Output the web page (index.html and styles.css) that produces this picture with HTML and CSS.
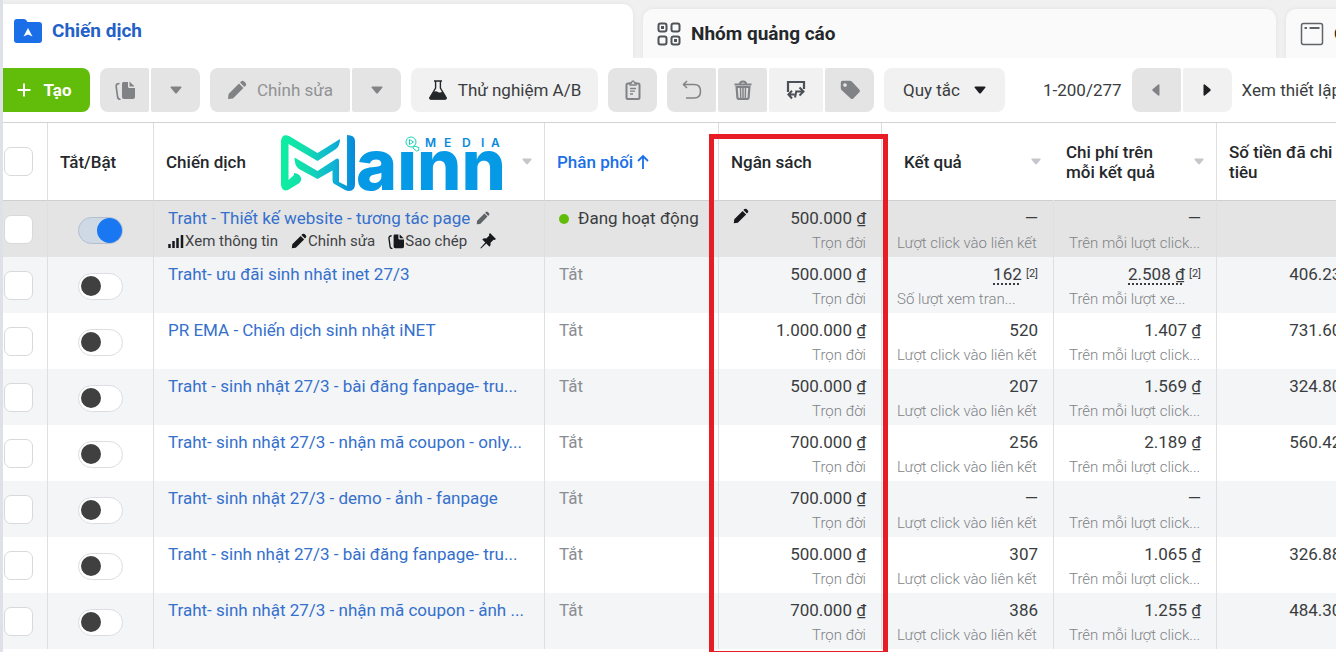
FILE: index.html
```html
<!DOCTYPE html>
<html lang="vi">
<head>
<meta charset="utf-8">
<title>Chiến dịch</title>
<link rel="stylesheet" href="styles.css">
</head>
<body>
<svg class="sprite" aria-hidden="true">
  <symbol id="i-pencil" viewBox="0 0 20 20"><path d="M1 19l.6-5L12 3.6 16.4 8 6 18.400z M13 2.600l1.300-1.300q1.300-1 2.600 0l1.800 1.800q1 1.300 0 2.600L17.400 7z" fill="currentColor"/></symbol>
  <symbol id="i-copy" viewBox="0 0 20 20"><path d="M8.500 2H13v4.500q0 1.500 1.500 1.500H20v9q0 2-2 2H9q-2 0-2-2V3.500Q7 2 8.500 2z" fill="currentColor"/><path d="M14.500 1.600L19.600 6.500H15q-.5 0-.5-.5z" fill="currentColor"/><path d="M4.500 3.500Q1 3.500 1.200 6.500L2.600 17q.4 2.500 3 2.500" fill="none" stroke="currentColor" stroke-width="1.700"/></symbol>
  <symbol id="i-down" viewBox="0 0 12 8"><path d="M1.300.5h9.400q1.300.2.600 1.300L7 7q-1 1-2 0L.7 1.800Q0 .7 1.300.5z" fill="currentColor"/></symbol>
  <symbol id="i-left" viewBox="0 0 8 12"><path d="M7.500 1v10q-.2 1-1.300.5L.8 7q-1-1 0-2L6.200.5Q7.300 0 7.500 1z" fill="currentColor"/></symbol>
  <symbol id="i-right" viewBox="0 0 8 12"><path d="M.5 1v10q.2 1 1.300.5L7.200 7q1-1 0-2L1.800.5Q.7 0 .5 1z" fill="currentColor"/></symbol>
</svg>

<div class="app">
  <nav class="tabs">
    <a class="tab tab-active" href="#campaigns">
      <svg class="tab-icon folder" viewBox="0 0 28 26"><path d="M3 1h7q1.500 0 2.500 1.500L13.500 4H25q3 0 3 3v15q0 3-3 3H3q-3 0-3-3V4q0-3 3-3z" fill="#1a6fe8"/><path d="M14 10l4.500 8.500L14 16.500l-4.500 2z" fill="#fff"/></svg>
      Chiến dịch
    </a>
    <a class="tab" href="#adsets">
      <svg class="tab-icon" viewBox="0 0 24 24" fill="none" stroke="#505357" stroke-width="2"><rect x="1.500" y="1.500" width="8" height="8" rx="2"/><rect x="14.500" y="1.500" width="8" height="8" rx="2"/><rect x="1.500" y="14.500" width="8" height="8" rx="2"/><rect x="14.500" y="14.500" width="8" height="8" rx="2"/><path d="M4 5.500h3M17 18.500h3" stroke-width="3"/></svg>
      Nhóm quảng cáo
    </a>
    <a class="tab" href="#ads">
      <svg class="tab-icon" viewBox="0 0 24 24" fill="none" stroke="#606468" stroke-width="1.500"><rect x="1.500" y="1.500" width="21" height="21" rx="2"/><path d="M4.500 6h2.500M9.500 6h10" stroke-width="2"/></svg>
      Quảng cáo
    </a>
  </nav>

  <div class="toolbar">
    <button class="btn create"><svg class="i16" viewBox="0 0 16 16"><path d="M8 1.500v13M1.500 8h13" stroke="#fff" stroke-width="2"/></svg>Tạo</button>
    <div class="group">
      <button class="btn off square" aria-label="Sao chép"><svg class="i20"><use href="#i-copy"/></svg></button>
      <button class="btn off square" aria-label="Tùy chọn sao chép"><svg class="caret"><use href="#i-down"/></svg></button>
    </div>
    <div class="group">
      <button class="btn off edit"><svg class="i20"><use href="#i-pencil"/></svg>Chỉnh sửa</button>
      <button class="btn off square" aria-label="Tùy chọn chỉnh sửa"><svg class="caret"><use href="#i-down"/></svg></button>
    </div>
    <button class="btn ab"><svg class="i20" viewBox="0 0 20 20"><path d="M6 1h8M7.600 1v7L2 17.500q-.6 1.500 1 1.500h14q1.600 0 1-1.500L12.400 8V1" fill="none" stroke="#25282b" stroke-width="1.400"/><path d="M5 12.500q2.500-2 5-.5t4.700-.8L18.500 17.500q.5 2-1.500 2H3q-2 0-1.500-2z" fill="#25282b"/></svg>Thử nghiệm A/B</button>
    <button class="btn off square" aria-label="Bảng tạm"><svg class="i20" viewBox="0 0 20 20" fill="none" stroke="currentColor"><rect x="3.500" y="3.500" width="13" height="15.500" rx="1.500" stroke-width="2"/><path d="M7 5V3h1.500q.2-2 1.500-2t1.500 2H13v2z" fill="#e4e4e4" stroke-width="1.300"/><path d="M7 8.500h6M7 11.200h5M7 14h3" stroke-width="1.300"/></svg></button>
    <div class="group">
      <button class="btn off square" aria-label="Hoàn tác"><svg class="i20" viewBox="0 0 20 20" fill="none" stroke="currentColor" stroke-width="1.500"><path d="M1.500 4.500H12q6.500 0 6.500 6.700T12 18H4"/><path d="M5 1L1.500 4.500 5 8"/></svg></button>
      <button class="btn off square" aria-label="Xóa"><svg class="i20" viewBox="0 0 20 20" fill="none" stroke="currentColor"><path d="M1.500 4.500h17" stroke-width="2"/><path d="M7 4q0-2.500 3-2.500T13 4" stroke-width="2"/><path d="M3.600 7l.8 10.500q.2 1.500 1.700 1.500h7.800q1.500 0 1.700-1.500L16.400 7z" stroke-width="2.200"/><path d="M7.500 7l.2 11M10 7v11M12.500 7l-.2 11" stroke-width="1.500"/></svg></button>
      <button class="btn export" aria-label="Xuất"><svg class="i20" viewBox="0 0 20 20" fill="none" stroke="#4b5057" stroke-width="2"><path d="M2 12V2h16v7" stroke-width="2.200"/><path d="M8.500 14.500H2.500M6 10.800l-3.600 3.700L6 18.500M10 11.500h7M13.500 7.500l4 4-4 4M9 17.500l1.500-7"/></svg></button>
      <button class="btn off square" aria-label="Gắn nhãn"><svg class="i20" viewBox="0 0 20 20"><path fill-rule="evenodd" d="M2.500.8l7.500 0q1 0 1.800.8l7.500 8q1.200 1.400 0 2.700l-6 6.200q-1.300 1.200-2.600 0L1.500 10Q.8 9 .8 8V2.500Q.8.8 2.500.8zM5 3.200a1.800 1.800 0 1 0 .01 0z" fill="currentColor"/></svg></button>
    </div>
    <button class="btn rules">Quy tắc<svg class="caret"><use href="#i-down"/></svg></button>
    <div class="pager">
      <span>1-200/277</span>
      <div class="group">
        <button class="btn off square" aria-label="Trang trước"><svg class="side"><use href="#i-left"/></svg></button>
        <button class="btn square" aria-label="Trang sau"><svg class="side"><use href="#i-right"/></svg></button>
      </div>
      <span>Xem thiết lập</span>
    </div>
  </div>

  <div class="grid">
    <table>
      <colgroup><col class="c-check"><col class="c-toggle"><col class="c-name"><col class="c-delivery"><col class="c-budget"><col class="c-result"><col class="c-cost"><col class="c-spend"></colgroup>
      <thead>
        <tr>
          <th><input class="check" type="checkbox" aria-label="Chọn tất cả"></th>
          <th>Tắt/Bật</th>
          <th><div class="head">Chiến dịch
            <svg class="logo" viewBox="0 -1 224 60" role="img" aria-label="Mainn Media">
              <defs>
                <linearGradient id="g" gradientUnits="userSpaceOnUse" x1="0" y1="30" x2="75" y2="30"><stop offset="0" stop-color="#0cf0a0"/><stop offset=".35" stop-color="#14dcae"/><stop offset=".7" stop-color="#0fb4d4"/><stop offset="1" stop-color="#0789dc"/></linearGradient>
              </defs>
              <path d="M1 8Q2 0 9 3L37.500 20 60 6q0 7-4 10L37.500 28 8.500 11V47l5.500-5V40q8 1 7 7.500-.5 2-4 4L8 57q-6 2-7-5z" fill="url(#g)"/>
              <path d="M14.500 24.500L37.500 38 56 26q3-1.500 3 2v21l8 4V2q8 0 8 6v43q0 7-6 7-2 0-4-1L54.500 51q-2-1-2-4V37.500L37.500 46 19 36q-4.500-3-4.500-11.500z" fill="url(#g)"/>
              <text class="logo-word" x="76" y="57">aınn</text>
              <text class="logo-media" x="145 164 182 201 211" y="14">MEDIA</text>
              <g fill="none" stroke="#19d3b4" stroke-width="1"><circle cx="131" cy="9" r="5"/><path d="M129.500 6.500v5l4-2.500zM133 15l1-2 5 1.500-.5 3-2 .5z"/></g>
            </svg>
            <svg class="sort"><use href="#i-down"/></svg></div></th>
          <th class="sorted"><div class="head">Phân phối<svg class="arrow" viewBox="0 0 12 16" fill="none" stroke="currentColor" stroke-width="1.800"><path d="M6 15V2M1 7l5-5 5 5"/></svg></div></th>
          <th>Ngân sách</th>
          <th class="wide"><div class="head">Kết quả<svg class="sort"><use href="#i-down"/></svg></div></th>
          <th class="joined"><div class="head">Chi phí trên<br>mỗi kết quả<svg class="sort"><use href="#i-down"/></svg></div></th>
          <th>Số tiền đã chi tiêu</th>
        </tr>
      </thead>
      <tbody>
        <tr class="hovered">
          <td><input class="check" type="checkbox" aria-label="Chọn"></td>
          <td><input class="toggle" type="checkbox" role="switch" aria-label="Bật" checked></td>
          <td class="name"><div class="line"><a href="#c1">Traht - Thiết kế website - tương tác page</a><svg class="pen"><use href="#i-pencil"/></svg></div>
            <div class="actions">
              <button><svg class="i16" viewBox="0 0 16 16"><path d="M1.500 11v4M5.500 8v7M9.500 5v10M14 2v13" stroke="#17191c" stroke-width="2.500"/></svg>Xem thông tin</button>
              <button><svg class="i16"><use href="#i-pencil"/></svg>Chỉnh sửa</button>
              <button><svg class="i16"><use href="#i-copy"/></svg>Sao chép</button>
              <button aria-label="Ghim"><svg class="i16" viewBox="0 0 16 16"><path d="M10 0l6 6-1.500 1-1-.3-3 3q.7 2.500-1 4L6.300 10.500 1 15.500.3 15l5-5.600L2.300 6.500q1.500-1.700 4-1l3-3L9 1.200z" fill="#17191c"/></svg></button>
            </div></td>
          <td class="delivery"><span class="dot"></span>Đang hoạt động</td>
          <td class="num budget"><svg class="i16"><use href="#i-pencil"/></svg><b>500.000 ₫</b><small>Trọn đời</small></td>
          <td class="num"><b>—</b><small>Lượt click vào liên kết</small></td>
          <td class="num"><b>—</b><small>Trên mỗi lượt click...</small></td>
          <td class="num"></td>
        </tr>
        <tr>
          <td><input class="check" type="checkbox" aria-label="Chọn"></td>
          <td><input class="toggle" type="checkbox" role="switch" aria-label="Bật"></td>
          <td class="name"><a href="#c2">Traht- ưu đãi sinh nhật inet 27/3</a></td>
          <td class="delivery">Tắt</td>
          <td class="num budget"><b>500.000 ₫</b><small>Trọn đời</small></td>
          <td class="num"><b><u>162</u> <sup>[2]</sup></b><small>Số lượt xem tran...</small></td>
          <td class="num"><b><u>2.508 ₫</u> <sup>[2]</sup></b><small>Trên mỗi lượt xe...</small></td>
          <td class="num"><b>406.230 ₫</b></td>
        </tr>
        <tr>
          <td><input class="check" type="checkbox" aria-label="Chọn"></td>
          <td><input class="toggle" type="checkbox" role="switch" aria-label="Bật"></td>
          <td class="name"><a href="#c3">PR EMA - Chiến dịch sinh nhật iNET</a></td>
          <td class="delivery">Tắt</td>
          <td class="num budget"><b>1.000.000 ₫</b><small>Trọn đời</small></td>
          <td class="num"><b>520</b><small>Lượt click vào liên kết</small></td>
          <td class="num"><b>1.407 ₫</b><small>Trên mỗi lượt click...</small></td>
          <td class="num"><b>731.600 ₫</b></td>
        </tr>
        <tr>
          <td><input class="check" type="checkbox" aria-label="Chọn"></td>
          <td><input class="toggle" type="checkbox" role="switch" aria-label="Bật"></td>
          <td class="name"><a href="#c4">Traht - sinh nhật 27/3 - bài đăng fanpage- tru...</a></td>
          <td class="delivery">Tắt</td>
          <td class="num budget"><b>500.000 ₫</b><small>Trọn đời</small></td>
          <td class="num"><b>207</b><small>Lượt click vào liên kết</small></td>
          <td class="num"><b>1.569 ₫</b><small>Trên mỗi lượt click...</small></td>
          <td class="num"><b>324.800 ₫</b></td>
        </tr>
        <tr>
          <td><input class="check" type="checkbox" aria-label="Chọn"></td>
          <td><input class="toggle" type="checkbox" role="switch" aria-label="Bật"></td>
          <td class="name"><a href="#c5">Traht- sinh nhật 27/3 - nhận mã coupon - only...</a></td>
          <td class="delivery">Tắt</td>
          <td class="num budget"><b>700.000 ₫</b><small>Trọn đời</small></td>
          <td class="num"><b>256</b><small>Lượt click vào liên kết</small></td>
          <td class="num"><b>2.189 ₫</b><small>Trên mỗi lượt click...</small></td>
          <td class="num"><b>560.420 ₫</b></td>
        </tr>
        <tr>
          <td><input class="check" type="checkbox" aria-label="Chọn"></td>
          <td><input class="toggle" type="checkbox" role="switch" aria-label="Bật"></td>
          <td class="name"><a href="#c6">Traht- sinh nhật 27/3 - demo - ảnh - fanpage</a></td>
          <td class="delivery">Tắt</td>
          <td class="num budget"><b>700.000 ₫</b><small>Trọn đời</small></td>
          <td class="num"><b>—</b><small>Lượt click vào liên kết</small></td>
          <td class="num"><b>—</b><small>Trên mỗi lượt click...</small></td>
          <td class="num"></td>
        </tr>
        <tr>
          <td><input class="check" type="checkbox" aria-label="Chọn"></td>
          <td><input class="toggle" type="checkbox" role="switch" aria-label="Bật"></td>
          <td class="name"><a href="#c7">Traht - sinh nhật 27/3 - bài đăng fanpage- tru...</a></td>
          <td class="delivery">Tắt</td>
          <td class="num budget"><b>500.000 ₫</b><small>Trọn đời</small></td>
          <td class="num"><b>307</b><small>Lượt click vào liên kết</small></td>
          <td class="num"><b>1.065 ₫</b><small>Trên mỗi lượt click...</small></td>
          <td class="num"><b>326.880 ₫</b></td>
        </tr>
        <tr>
          <td><input class="check" type="checkbox" aria-label="Chọn"></td>
          <td><input class="toggle" type="checkbox" role="switch" aria-label="Bật"></td>
          <td class="name"><a href="#c8">Traht- sinh nhật 27/3 - nhận mã coupon - ảnh ...</a></td>
          <td class="delivery">Tắt</td>
          <td class="num budget"><b>700.000 ₫</b><small>Trọn đời</small></td>
          <td class="num"><b>386</b><small>Lượt click vào liên kết</small></td>
          <td class="num"><b>1.255 ₫</b><small>Trên mỗi lượt click...</small></td>
          <td class="num"><b>484.300 ₫</b></td>
        </tr>
      </tbody>
    </table>
    <div class="highlight"></div>
  </div>
</div>
</body>
</html>
```
FILE: styles.css
```css
* { box-sizing: border-box; }
body {
  margin: 0;
  background: #f0f0f0;
  font-family: Roboto, "Noto Sans", sans-serif;
  font-size: 17px;
  line-height: 20px;
  color: #3a3d40;
}
a { color: inherit; text-decoration: none; }
button { font: inherit; color: inherit; border: 0; padding: 0; background: none; }
.sprite { display: none; }

.app {
  min-height: 100vh;
  display: flex;
  flex-direction: column;
  border-left: 3px solid #dfe1e8;
  overflow: hidden;
}

.tabs { display: flex; align-items: flex-end; gap: 10px; padding-top: 4px; overflow: hidden; }
.tab {
  flex: 0 0 633px;
  display: flex;
  align-items: center;
  gap: 10px;
  height: 49px;
  padding: 0 14px;
  border-radius: 10px 10px 0 0;
  background: #fafafa;
  box-shadow: 0 0 5px rgba(0, 0, 0, .06);
  font-size: 19px;
  font-weight: 700;
  color: #25282b;
}
.tab-active {
  flex-basis: 630px;
  height: 54px;
  padding: 0 11px;
  border-top-left-radius: 0;
  background: #fff;
  color: #2360c8;
}
.tab-icon { width: 24px; height: 24px; }
.tab-icon.folder { width: 28px; height: 26px; }

.toolbar {
  display: flex;
  align-items: center;
  gap: 10px;
  padding: 10px 0;
  background: #fff;
  white-space: nowrap;
}
.group { display: flex; gap: 2px; }
.group .btn { border-radius: 2px; }
.group .btn:first-child { border-radius: 8px 2px 2px 8px; }
.group .btn:last-child { border-radius: 2px 8px 8px 2px; }
.btn {
  flex: none;
  display: flex;
  align-items: center;
  justify-content: center;
  gap: 10px;
  height: 44px;
  padding: 0 14px;
  border-radius: 8px;
  background: #f1f1f1;
}
.btn.off { background: #e4e4e4; color: #808285; }
.btn.square { width: 49px; padding: 0; }
.btn.export { width: 54px; }
.btn.edit { width: 140px; color: #909294; }
.btn.edit svg { color: #808285; }
.btn.ab { width: 187px; }
.btn.rules { width: 121px; gap: 14px; }
.btn.rules .caret, .btn.square:not(.off) { color: #1c1e21; }
.btn.create { width: 87px; gap: 12px; padding: 0 18px 0 12px; border-radius: 0 8px 8px 0; background: #62bd0a; color: #fff; font-weight: 700; }
.pager { display: flex; align-items: center; gap: 10px; padding-left: 28px; }
.i20 { width: 20px; height: 20px; }
.i16 { width: 16px; height: 16px; }
.caret { width: 12px; height: 8px; }
.side { width: 8px; height: 12px; }

.grid { position: relative; flex: 1; background: #fff; }
table { table-layout: fixed; width: 1377px; border-collapse: separate; border-spacing: 0; border-top: 1px solid #d3d3d5; }
.c-check { width: 44px; }
.c-toggle { width: 106px; }
.c-name { width: 391px; }
.c-delivery { width: 174px; }
.c-budget { width: 163px; }
.c-result { width: 172px; }
.c-cost { width: 163px; }
.c-spend { width: 164px; }

th {
  height: 78px;
  padding: 0 12px;
  border-left: 1px solid #dddfe1;
  border-bottom: 1px solid #cfcfd1;
  text-align: left;
  font-size: 17px;
  font-weight: 500;
  color: #25282b;
}
th.wide { padding-left: 22px; }
th.joined { border-left-color: transparent; }
th.sorted { color: #1a6fe8; }
th:last-child { padding-right: 36px; }
td { height: 56px; padding: 7px 15px 4px 14px; border-left: 1px solid #dddfe1; vertical-align: top; }
th:first-child, td:first-child { padding: 0 0 0 1px; border-left: 0; }
td:nth-child(-n+2) { vertical-align: middle; }
td:nth-child(2) { padding: 2px 0 0 30px; }
tbody tr:nth-child(even) { background: #f4f5f7; }
tbody tr.hovered { background: #e4e4e4; }

.head { display: flex; align-items: center; }
.sort { flex: none; width: 10px; height: 7px; margin-left: auto; color: #c3c6ca; }
.arrow { width: 12px; height: 16px; margin-left: 4px; }
.logo { flex: none; width: 224px; height: 60px; margin-left: 34px; overflow: visible; }
.logo-word { font: 800 70px Inter, sans-serif; fill: #0599e6; }
.logo-media { font: 600 12px Inter, sans-serif; fill: #0789dc; }

.check {
  display: block;
  appearance: none;
  width: 29px;
  height: 29px;
  margin: 0;
  border: 1px solid #d8d9db;
  border-radius: 7px;
  background: #fff;
}
.toggle {
  display: flex;
  align-items: center;
  appearance: none;
  width: 45px;
  height: 27px;
  margin: 0;
  padding: 0 2px;
  border: 1px solid #dcdde0;
  border-radius: 14px;
  background: #fff;
}
.toggle::before { content: ""; width: 20px; height: 20px; border-radius: 50%; background: #404040; }
.toggle:checked { justify-content: flex-end; padding: 0; background: #cfd9e6; border-color: #b4bfce; }
.toggle:checked::before { width: 25px; height: 25px; background: #1977f2; }

.name { color: #3470cc; white-space: nowrap; }
.line { display: flex; align-items: center; gap: 6px; }
.pen { width: 14px; height: 14px; color: #5f6368; }
.actions { display: flex; gap: 13px; padding-top: 3px; font-size: 15px; color: #3f4245; }
.actions button { display: flex; align-items: center; gap: 1px; }
.actions svg { color: #17191c; }
.delivery { color: #8a8d91; white-space: nowrap; }
.hovered .delivery { color: #3a3d40; }
.dot { display: inline-block; width: 10px; height: 10px; margin-right: 9px; border-radius: 50%; background: #62bd0a; }

.num { white-space: nowrap; }
.num b { display: block; font-weight: 400; text-align: right; }
.num small { display: block; padding: 5px 0 0 1px; font-size: 15px; font-weight: 300; color: #808386; }
.budget small { text-align: right; }
.budget svg { float: left; color: #17191c; }
.num u { text-decoration: underline dotted 2px; text-underline-offset: 3px; }
.num sup { font-size: 11px; line-height: 0; vertical-align: 3px; }

.highlight {
  position: absolute;
  top: 12px;
  bottom: -4px;
  left: 706px;
  width: 179px;
  border: 5px solid #e81c24;
  pointer-events: none;
}
```
